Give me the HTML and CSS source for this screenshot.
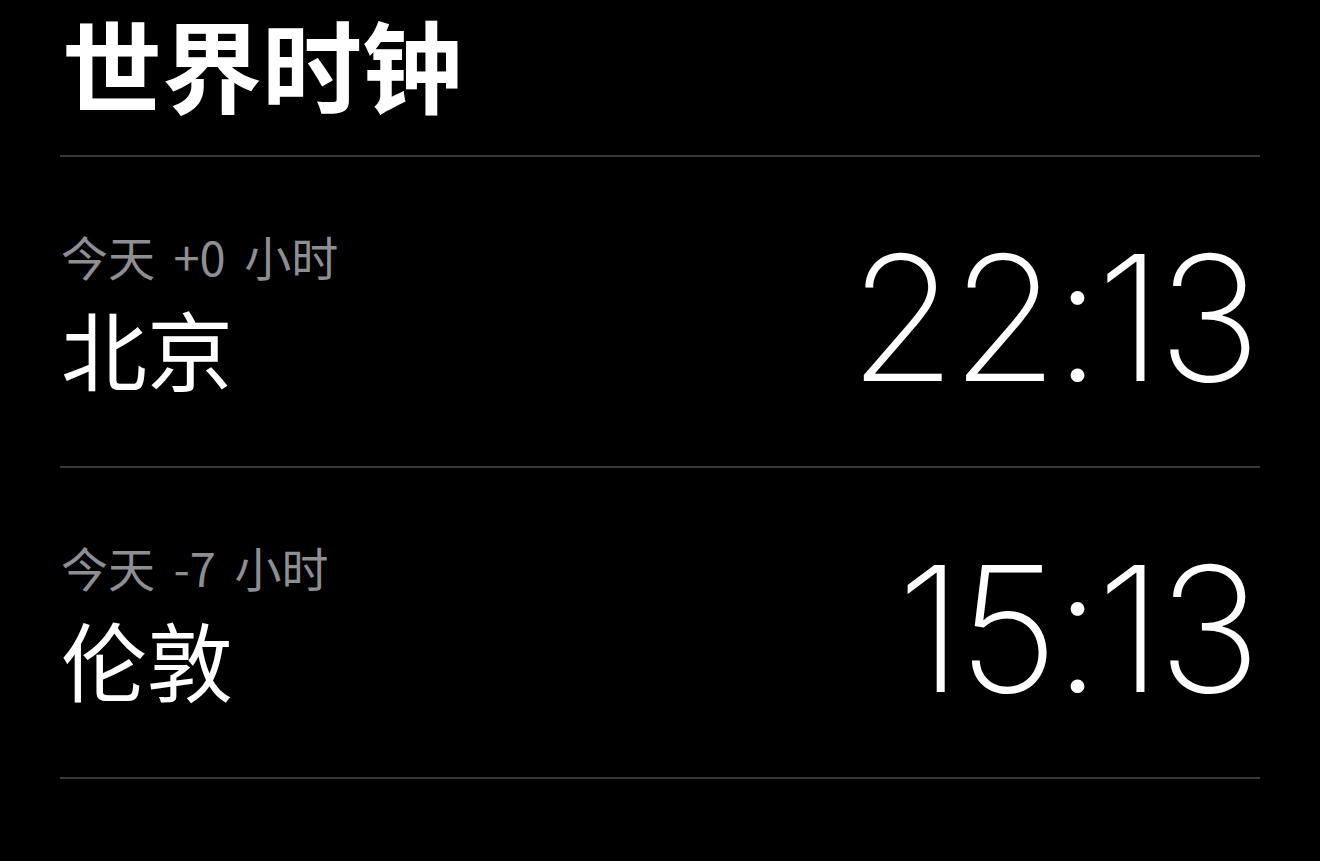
FILE: index.html
```html
<!DOCTYPE html>
<html lang="zh-CN">
<head>
<meta charset="utf-8">
<title>世界时钟</title>
<link rel="stylesheet" href="styles.css">
</head>
<body>
<main class="clock-page">
  <h1 class="page-title">世界时钟</h1>
  <ul class="city-list">
    <li class="city-row">
      <div class="city-info">
        <div class="city-offset">今天 +0 小时</div>
        <div class="city-name">北京</div>
      </div>
      <div class="city-time">22:13</div>
    </li>
    <li class="city-row">
      <div class="city-info">
        <div class="city-offset">今天 -7 小时</div>
        <div class="city-name">伦敦</div>
      </div>
      <div class="city-time">15:13</div>
    </li>
  </ul>
</main>
</body>
</html>
```
FILE: styles.css
```css
html, body {
  margin: 0;
  padding: 0;
  background: #000;
  color: #fff;
}

body {
  font-family: "Noto Sans CJK SC", "Noto Sans", sans-serif;
}

.clock-page {
  padding: 0 60px;
}

.page-title {
  margin: 0;
  height: 155px;
  padding: 0 0 0 2px;
  box-sizing: border-box;
  font-size: 100px;
  font-weight: 700;
  line-height: 126px;
}

.city-list {
  list-style: none;
  margin: 0;
  padding: 0;
  border-bottom: 2px solid #38383a;
}

.city-row {
  display: flex;
  justify-content: space-between;
  align-items: center;
  height: 311px;
  box-sizing: border-box;
  border-top: 2px solid #38383a;
}

.city-info {
  display: flex;
  flex-direction: column;
  gap: 26px;
  padding-left: 1px;
}

.city-offset {
  font-size: 47px;
  line-height: 1;
  color: #8e8e93;
  word-spacing: 8px;
}

.city-name {
  font-size: 86px;
  line-height: 1;
}

.city-time {
  font-family: "Inter", "Liberation Sans", sans-serif;
  font-weight: 200;
  font-size: 174px;
  line-height: 1;
  letter-spacing: -5px;
  padding-top: 12px;
  padding-right: 4px;
}
```
